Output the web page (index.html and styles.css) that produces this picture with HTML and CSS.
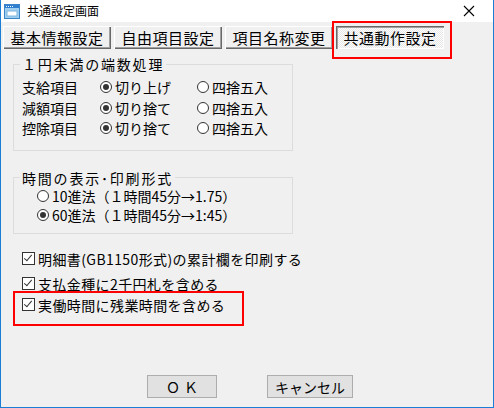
FILE: index.html
```html
<!DOCTYPE html>
<html lang="ja">
<head>
    <meta charset="UTF-8">
    <title>共通設定画面</title>
    <link rel="stylesheet" href="styles.css">
</head>
<body>

<div class="window">
    <div class="titlebar">
        <svg class="app-icon" width="16" height="15" viewBox="0 0 16 15">
            <rect x="0.5" y="0.5" width="15" height="14" fill="#9fd0f0" stroke="#3a86c8"/>
            <rect x="1" y="1" width="14" height="3" fill="#2f7fd0"/>
            <rect x="2" y="2" width="1" height="1" fill="#fff"/>
            <rect x="4" y="2" width="1" height="1" fill="#fff"/>
            <rect x="6" y="2" width="1" height="1" fill="#fff"/>
            <rect x="8" y="2" width="1" height="1" fill="#fff"/>
            <rect x="3" y="7" width="10" height="5" fill="#fff" stroke="#7fb3dc" stroke-width="1"/>
        </svg>
        <span class="title-text">共通設定画面</span>
        <svg class="close-icon" width="12" height="12" viewBox="0 0 12 12">
            <path d="M1 1 L11 11 M11 1 L1 11" stroke="#000" stroke-width="1.1"/>
        </svg>
    </div>

    <div class="tabs">
        <button type="button" class="tab">基本情報設定</button>
        <button type="button" class="tab">自由項目設定</button>
        <button type="button" class="tab">項目名称変更</button>
        <button type="button" class="tab tab-on highlight">共通動作設定</button>
    </div>

    <fieldset class="group group-round">
        <legend>１円未満の端数処理</legend>
        <div class="round-grid">
            <span>支給項目</span>
            <label class="opt"><span class="radio on"></span>切り上げ</label>
            <label class="opt"><span class="radio"></span>四捨五入</label>

            <span>減額項目</span>
            <label class="opt"><span class="radio on"></span>切り捨て</label>
            <label class="opt"><span class="radio"></span>四捨五入</label>

            <span>控除項目</span>
            <label class="opt"><span class="radio on"></span>切り捨て</label>
            <label class="opt"><span class="radio"></span>四捨五入</label>
        </div>
    </fieldset>

    <fieldset class="group group-time">
        <legend>時間の表示･印刷形式</legend>
        <label class="opt time-row"><span class="radio"></span>10進法（１時間45分→1.75）</label>
        <label class="opt time-row"><span class="radio on"></span>60進法（１時間45分→1:45）</label>
    </fieldset>

    <div class="checks">
        <label class="opt check-row"><span class="check"></span>明細書(GB1150形式)の累計欄を印刷する</label>
        <label class="opt check-row"><span class="check"></span>支払金種に2千円札を含める</label>
        <label class="opt check-row highlight-row"><span class="check"></span>実働時間に残業時間を含める</label>
    </div>

    <div class="footer">
        <button type="button" class="btn btn-ok">ＯＫ</button>
        <button type="button" class="btn btn-cancel">キャンセル</button>
    </div>
</div>

</body>
</html>
```

FILE: styles.css
```css
* { box-sizing: border-box; margin: 0; padding: 0 }
body {
    font-family: "Noto Sans CJK JP", "Liberation Sans", sans-serif;
    font-size: 14px;
    color: #000;
    background: #fff;
}

.window {
    width: 494px;
    height: 408px;
    border: 1px solid #1a7fd4;
    border-top: none;
    background: #f0f0f0;
    display: flex;
    flex-direction: column;
}

/* タイトルバー */
.titlebar {
    height: 22px;
    background: #fff;
    display: flex;
    align-items: center;
    padding-left: 3px;
}
.app-icon { margin-right: 7px }
.title-text { font-size: 12px; line-height: 1 }
.close-icon { margin-left: auto; margin-right: 18px }

/* タブ風ボタン */
.tabs {
    display: flex;
    gap: 3px;
    padding: 4px 0 0 2px;
}
.tab {
    position: relative;
    width: 108px;
    height: 23px;
    font: inherit;
    font-size: 15px;
    letter-spacing: 0.5px;
    line-height: 1;
    background: #f0f0f0;
    border: none;
    box-shadow: inset 1px 1px #fff, inset -1px -1px #696969, inset -2px -2px #a0a0a0;
}
.tab-on {
    background: repeating-conic-gradient(#fff 0 25%, #e6e6e6 0 50%) 0 0 / 2px 2px;
    box-shadow: inset 1px 1px #696969, inset 2px 2px #a0a0a0, inset -1px -1px #fff;
}
.highlight::after {
    content: "";
    position: absolute;
    top: -5px;
    left: -4px;
    width: 116px;
    height: 34px;
    border: 2px solid #ff0000;
}

/* グループ枠 */
.group {
    width: 280px;
    margin-left: 12px;
    border: 1px solid #dcdcdc;
    padding: 0 8px;
}
.group legend {
    margin-left: -2px;
    padding: 0 2px;
    line-height: 16px;
    letter-spacing: 1.8px;
}
.group-round { margin-top: 7px; padding-top: 5px; padding-bottom: 11px }
.group-time { margin-top: 19px; padding-top: 1px; padding-bottom: 8px }

.round-grid {
    display: grid;
    grid-template-columns: 78px 97px auto;
    grid-auto-rows: 20.5px;
    align-items: center;
}

.opt {
    display: flex;
    align-items: center;
    white-space: nowrap;
}
.radio {
    width: 12px;
    height: 12px;
    border: 1px solid #333;
    border-radius: 50%;
    background: #fff;
    margin-right: 3px;
    display: flex;
    align-items: center;
    justify-content: center;
}
.radio.on::before {
    content: "";
    width: 6px;
    height: 6px;
    border-radius: 50%;
    background: #333;
}

.time-row { height: 19px; padding-left: 15px }

/* チェックボックス */
.checks {
    display: flex;
    flex-direction: column;
    padding: 15px 0 0 21px;
}
.check-row {
    height: 20px;
    width: fit-content;
    position: relative;
    letter-spacing: 0.4px;
}
.check-row + .check-row { margin-top: 5px }
.check-row:last-child { margin-top: 1px }
.check {
    width: 13px;
    height: 13px;
    border: 1px solid #333;
    background: #fff;
    margin-right: 3px;
    position: relative;
}
.check::before {
    content: "";
    position: absolute;
    left: 3px;
    top: 0;
    width: 3px;
    height: 7px;
    border-right: 1.5px solid #333;
    border-bottom: 1.5px solid #333;
    transform: rotate(40deg);
}
.highlight-row::after {
    content: "";
    position: absolute;
    top: -4px;
    left: -9px;
    width: 227px;
    height: 31px;
    border: 2px solid #ff0000;
}

/* 下部ボタン */
.footer {
    margin-top: auto;
    display: flex;
    gap: 50px;
    padding: 0 0 9px 146px;
}
.btn {
    height: 23px;
    font: inherit;
    background: #e1e1e1;
    border: 1px solid #adadad;
}
.btn-ok { width: 70px; letter-spacing: 4px; padding-left: 4px }
.btn-cancel { width: 86px }
```
